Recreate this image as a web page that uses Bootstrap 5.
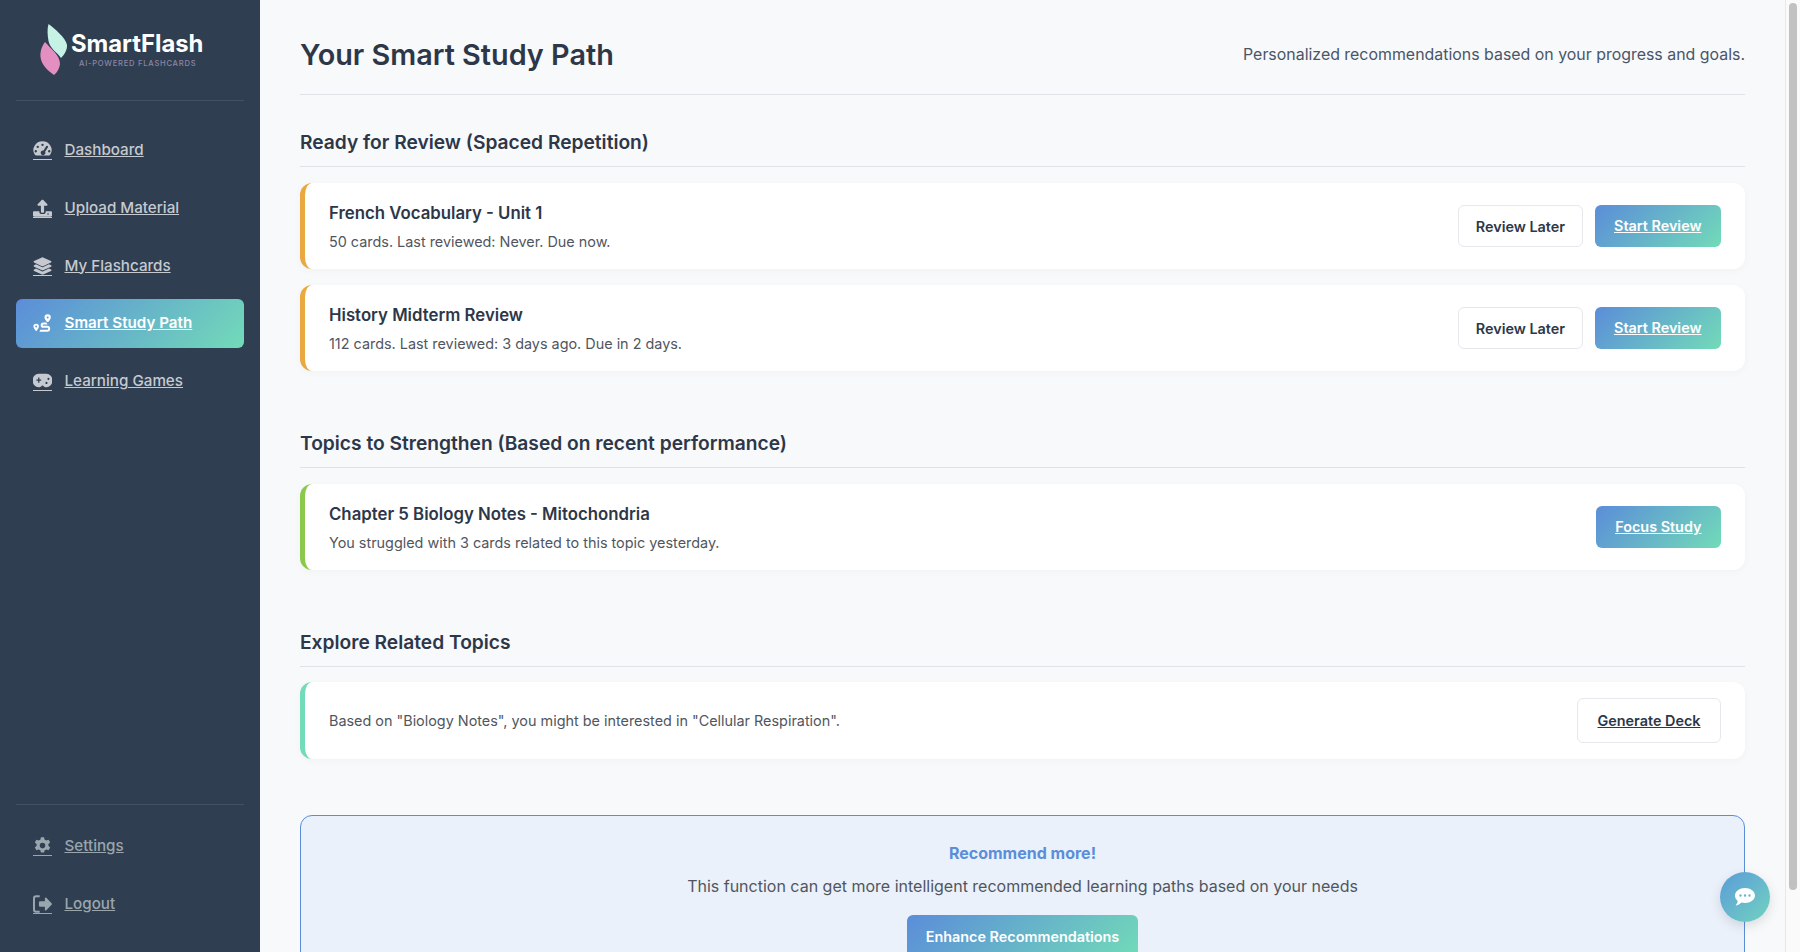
<!DOCTYPE html>
<html lang="en">
<head>
    <meta charset="UTF-8">
    <meta name="viewport" content="width=device-width, initial-scale=1.0">
    <title>SmartFlash - Smart Study Path</title>
    <link href="https://cdn.jsdelivr.net/npm/bootstrap@5.3.2/dist/css/bootstrap.min.css" rel="stylesheet">
    <style>
        html, body { height: 100%; }
        body {
            font-family: Inter, "Liberation Sans", sans-serif;
            background: #f7f9fb;
            color: #2d3748;
            overflow: hidden;
        }
        .sidebar {
            width: 260px;
            height: 100vh;
            background: #2f3e50;
            padding: 24px 16px 23px;
        }
        .logo-box { height: 77px; border-bottom: 1px solid #435062; padding-left: 24px; }
        .logo-name { font-size: 23.8px; font-weight: 700; color: #fff; line-height: 26px; margin-top: -1px; margin-left: -1px; }
        .logo-sub { font-size: 7.6px; font-weight: 500; color: #8d86a4; letter-spacing: .75px; line-height: 12px; margin-left: 7px; margin-top: 1px; }
        .sidebar-nav { margin-top: 25px; gap: 8.75px; }
        .side-link {
            height: 49px;
            padding: 0 17px;
            border-radius: 6px;
            color: #c6cad0;
            font-size: 15.2px;
            font-weight: 500;
            text-decoration: underline;
        }
        .side-link:hover { color: #fff; }
        .side-link.active {
            color: #fff;
            font-weight: 600;
            background: linear-gradient(135deg, #5b8dd9, #72dbb8);
        }
        .side-link .ico {
            width: 19px;
            height: 19px;
            margin-right: 12.500px;
            border-bottom: 1px solid currentColor;
            flex: none;
        }
        .side-link.active .ico { border-bottom: 0; }
        .side-link svg { display: block; width: 19px; height: 18px; fill: currentColor; }
        .sidebar-foot { border-top: 1px solid #435062; padding-top: 17px; gap: 8.75px; }
        .sidebar-foot .side-link { color: #9aa6ad; }
        .main-area { height: 100vh; overflow-y: auto; padding: 34px 40px 27px; min-width: 0; }
        .page-head { padding-bottom: 18px; border-bottom: 1px solid #dfe3e8; margin-bottom: 35px; }
        .page-head h1 { font-size: 28.8px; font-weight: 600; margin: 0; line-height: 42px; }
        .page-head p { font-size: 15.92px; color: #4a5568; margin: 0; }
        .sec-title {
            font-size: 19.2px;
            font-weight: 600;
            padding-bottom: 12px;
            border-bottom: 1px solid #dfe3e8;
            margin-bottom: 16px;
            line-height: 24px;
        }
        section { margin-bottom: 60px; }
        section.last-sec { margin-bottom: 56px; }
        section.last-sec .sec-title { margin-bottom: 15px; }
        .path-card {
            background: #fff;
            border: 0;
            border-left: 5px solid #e9a840;
            border-radius: 12px;
            box-shadow: 0 2px 8px rgba(0, 0, 0, .03);
            padding: 16px 24px;
            margin-bottom: 16px;
        }
        .path-card.weak { border-left-color: #8cc84b; }
        .path-card.related { border-left-color: #72dbb8; }
        .path-card h5 { font-size: 16.8px; font-weight: 600; line-height: 28px; margin: 0 0 4px; }
        .path-card p { font-size: 14.4px; line-height: 22px; color: #51565e; margin: 0; }
        .btn-later {
            font-size: 14.4px; font-weight: 600; color: #2d3748;
            background: #fff; border: 1.5px solid #e6e8ec; border-radius: 6px;
            padding: 9.5px 16.5px; line-height: 21px;
        }
        .btn-grad {
            font-size: 14.4px; font-weight: 600; color: #fff;
            background: linear-gradient(135deg, #5b8dd9, #72dbb8);
            border: 0; border-radius: 6px;
            padding: 10px 19.5px 11px; line-height: 21px;
            text-decoration: underline;
        }
        .btn-grad:hover { color: #fff; }
        .btn-gen { padding: 11px 19.5px; line-height: 21px; text-decoration: underline; }
        .promo {
            background: #eaf1fa;
            border: 1px solid #5b8dd9;
            border-radius: 12px;
            padding: 24px;
            text-align: center;
        }
        .promo h6 { font-size: 16px; font-weight: 700; color: #5b8dd9; margin: 0 0 7px; line-height: 27px; }
        .promo p { font-size: 16px; color: #51565e; margin: 0 0 17px; line-height: 24px; }
        .promo .btn-grad { text-decoration: none; padding: 11px 19px 12px; }
        .scroll-rail {
            width: 15px;
            height: 100vh;
            background: #fafafa;
            border-left: 1px solid #e8e8e8;
            padding: 3px 3px 0 3px;
        }
        .scroll-thumb { height: 887px; background: #c1c1c1; border-radius: 4px; }
        .chat-fab {
            position: fixed; right: 30px; bottom: 30px;
            width: 50px; height: 50px; border-radius: 50%;
            background: linear-gradient(135deg, #5b9bd9, #72d3bf);
            box-shadow: 0 4px 12px rgba(0, 0, 0, .12);
            border: 0;
        }
    </style>
</head>
<body>
<div class="d-flex">
    <aside class="sidebar d-flex flex-column flex-shrink-0">
        <div class="logo-box d-flex align-items-start">
            <svg width="28" height="52" viewBox="0 0 28 52" class="flex-shrink-0">
                <path d="M8.500 0C14 4 26 14 27 21 27.500 26 24 31 21 34 18 29 10 25 8.500 17 7.500 11 7 5 8.500 0Z" fill="#c6f1e5"/>
                <path d="M5 18C11 25 20 31 20 40 19.500 44 17 49 14 51 8 47 1 40 .500 33 0 27 2 22 5 18Z" fill="#e48fc1"/>
            </svg>
            <div class="ms-1 pt-2">
                <div class="logo-name">SmartFlash</div>
                <div class="logo-sub">AI-POWERED FLASHCARDS</div>
            </div>
        </div>
        <nav class="nav flex-column sidebar-nav flex-grow-1">
            <a class="nav-link side-link d-flex align-items-center" href="#">
                <span class="ico"><svg viewBox="0 0 24 22"><path fill-rule="evenodd" d="M12 0a11.500 11 0 0 1 10 16.500c-.5 1-1 1.500-2 1.500H4c-1 0-1.500-.5-2-1.500A11.500 11 0 0 1 12 0ZM12 3a1.500 1.500 0 1 0 0 3 1.500 1.500 0 0 0 0-3ZM6 5.500a1.500 1.500 0 1 0 0 3 1.500 1.500 0 0 0 0-3ZM3.500 11a1.500 1.500 0 1 0 0 3 1.500 1.500 0 0 0 0-3ZM20.500 11a1.500 1.500 0 1 0 0 3 1.500 1.500 0 0 0 0-3ZM18 5.500a1.500 1.500 0 0 0-1.200.6l-3.500 5.500a3 3 0 1 0 2 1.500l3.600-5.500A1.500 1.500 0 0 0 18 5.500Z"/></svg></span>
                Dashboard
            </a>
            <a class="nav-link side-link d-flex align-items-center" href="#">
                <span class="ico"><svg viewBox="0 0 24 22"><path d="M10 16V8H6.500c-.8 0-1.200-1-.6-1.600L11 1c.5-.6 1.500-.6 2 0l5.100 5.400c.6.6.2 1.600-.6 1.600H14v8c0 .6-.4 1-1 1h-2c-.6 0-1-.4-1-1Z"/><path fill-rule="evenodd" d="M1.500 15H8v1.500c0 1 1 2 2 2h4c1 0 2-1 2-2V15h6.500c.8 0 1.500.7 1.500 1.500v4c0 .8-.7 1.500-1.500 1.500h-21C.7 22 0 21.300 0 20.500v-4C0 15.700.7 15 1.500 15ZM19 17.500a1 1 0 1 0 0 2 1 1 0 0 0 0-2Z"/></svg></span>
                Upload Material
            </a>
            <a class="nav-link side-link d-flex align-items-center" href="#">
                <span class="ico"><svg viewBox="0 0 24 22"><path d="M11.300.2c.5-.2 1-.2 1.400 0l10 4.600c.8.400.8 1.500 0 1.800l-10 4.600c-.5.200-1 .2-1.400 0L1.300 6.600c-.8-.4-.8-1.500 0-1.800Z"/><path d="M3.800 8.800l7.300 3.400c.6.300 1.200.3 1.800 0l7.300-3.400 2.600 1.200c.8.400.8 1.500 0 1.800l-10 4.600c-.5.200-1 .2-1.400 0l-10-4.600c-.8-.4-.8-1.500 0-1.800Z"/><path d="M3.800 14.200l7.300 3.400c.6.300 1.200.3 1.800 0l7.300-3.400 2.600 1.200c.8.400.8 1.500 0 1.800l-10 4.600c-.5.200-1 .2-1.400 0l-10-4.600c-.8-.4-.8-1.500 0-1.800Z"/></svg></span>
                My Flashcards
            </a>
            <a class="nav-link side-link active d-flex align-items-center" href="#">
                <span class="ico"><svg viewBox="0 0 24 22"><path fill-rule="evenodd" d="M4 12a3.500 3.500 0 0 1 3.500 3.500c0 1.600-2.200 4.500-2.900 5.400-.3.400-.9.400-1.200 0C2.700 20 .5 17.100.5 15.500A3.500 3.500 0 0 1 4 12Zm0 2.300a1.200 1.200 0 1 0 0 2.400 1.200 1.200 0 0 0 0-2.400Z"/><path fill-rule="evenodd" d="M18.500 0a4 4 0 0 1 4 4c0 1.600-2 4.200-3 5.400-.5.600-1.500.6-2 0-1-1.200-3-3.800-3-5.400a4 4 0 0 1 4-4Zm0 2.700a1.300 1.300 0 1 0 0 2.600 1.300 1.300 0 0 0 0-2.600Z"/><path d="M17 10.500h-4a3.300 3.300 0 0 0 0 6.600h5a1.200 1.200 0 0 1 0 2.400H9.500L8 22h10a3.700 3.700 0 0 0 0-7.400h-5a.9.9 0 0 1 0-1.700h5.300Z"/></svg></span>
                Smart Study Path
            </a>
            <a class="nav-link side-link d-flex align-items-center" href="#">
                <span class="ico"><svg viewBox="0 0 24 20" preserveAspectRatio="none"><path fill-rule="evenodd" d="M7 2h10a7 7 0 0 1 0 15c-2 0-3.500-1-4.500-2h-1c-1 1-2.500 2-4.500 2A7 7 0 0 1 7 2Zm-.5 4v2.200H4.300v1.600h2.200V12h1.600V9.800h2.200V8.200H8.100V6ZM17 10.800a1.300 1.300 0 1 0 0 2.600 1.300 1.300 0 0 0 0-2.600Zm2.500-4.500a1.300 1.300 0 1 0 0 2.600 1.300 1.300 0 0 0 0-2.600Z"/></svg></span>
                Learning Games
            </a>
        </nav>
        <nav class="nav flex-column sidebar-foot">
            <a class="nav-link side-link d-flex align-items-center" href="#">
                <span class="ico"><svg viewBox="0 0 24 22"><path fill-rule="evenodd" d="M10 0h4l.7 3c.7.2 1.400.6 2 1l3-1 2 3.500-2.300 2a7 7 0 0 1 0 2.300l2.300 2-2 3.500-3-1c-.6.500-1.300.8-2 1l-.7 3h-4l-.7-3c-.7-.2-1.400-.5-2-1l-3 1-2-3.500 2.300-2a7 7 0 0 1 0-2.300l-2.300-2 2-3.500 3 1c.6-.4 1.300-.8 2-1ZM12 7a3.500 3.500 0 1 0 0 7 3.500 3.500 0 0 0 0-7Z"/></svg></span>
                Settings
            </a>
            <a class="nav-link side-link d-flex align-items-center" href="#">
                <span class="ico"><svg viewBox="0 0 24 22"><path d="M8.500 2.500H4a1.500 1.500 0 0 0-1.500 1.500v14A1.500 1.500 0 0 0 4 19.500h4.500V22H4a4 4 0 0 1-4-4V4a4 4 0 0 1 4-4h4.500Z"/><path d="M15 3.800c0-1 1.100-1.500 1.800-.8l6.700 7c.6.600.6 1.400 0 2l-6.700 7c-.7.700-1.800.2-1.800-.8V14.500H9a1.500 1.500 0 0 1-1.500-1.500V9A1.500 1.500 0 0 1 9 7.500h6Z"/></svg></span>
                Logout
            </a>
        </nav>
    </aside>

    <main class="main-area flex-grow-1">
        <header class="page-head d-flex justify-content-between align-items-center">
            <h1>Your Smart Study Path</h1>
            <p>Personalized recommendations based on your progress and goals.</p>
        </header>

        <section>
            <h2 class="sec-title">Ready for Review (Spaced Repetition)</h2>
            <div class="path-card d-flex justify-content-between align-items-center">
                <div>
                    <h5>French Vocabulary - Unit 1</h5>
                    <p>50 cards. Last reviewed: Never. Due now.</p>
                </div>
                <div class="d-flex align-items-center gap-2">
                    <button class="btn btn-later me-1" type="button">Review Later</button>
                    <a class="btn btn-grad" href="#">Start Review</a>
                </div>
            </div>
            <div class="path-card d-flex justify-content-between align-items-center">
                <div>
                    <h5>History Midterm Review</h5>
                    <p>112 cards. Last reviewed: 3 days ago. Due in 2 days.</p>
                </div>
                <div class="d-flex align-items-center gap-2">
                    <button class="btn btn-later me-1" type="button">Review Later</button>
                    <a class="btn btn-grad" href="#">Start Review</a>
                </div>
            </div>
        </section>

        <section>
            <h2 class="sec-title">Topics to Strengthen (Based on recent performance)</h2>
            <div class="path-card weak d-flex justify-content-between align-items-center">
                <div>
                    <h5>Chapter 5 Biology Notes - Mitochondria</h5>
                    <p>You struggled with 3 cards related to this topic yesterday.</p>
                </div>
                <a class="btn btn-grad" href="#">Focus Study</a>
            </div>
        </section>

        <section class="last-sec">
            <h2 class="sec-title">Explore Related Topics</h2>
            <div class="path-card related d-flex justify-content-between align-items-center">
                <p>Based on "Biology Notes", you might be interested in "Cellular Respiration".</p>
                <a class="btn btn-later btn-gen" href="#">Generate Deck</a>
            </div>
        </section>

        <div class="promo">
            <h6>Recommend more!</h6>
            <p>This function can get more intelligent recommended learning paths based on your needs</p>
            <a class="btn btn-grad" href="#">Enhance Recommendations</a>
        </div>
    </main>

    <div class="scroll-rail flex-shrink-0"><div class="scroll-thumb"></div></div>
</div>

<button class="chat-fab d-flex align-items-center justify-content-center" type="button" aria-label="Chat">
    <svg width="20" height="18" viewBox="0 0 20 18"><path fill-rule="evenodd" fill="#fff" d="M10 0c5.500 0 10 3.300 10 7.500S15.500 15 10 15c-1.300 0-2.500-.2-3.600-.5C5 15.800 3 17.500.5 17.500c1.300-1.500 2-3 2.200-4.500C1 11.600 0 9.700 0 7.500 0 3.300 4.500 0 10 0ZM5.500 6.300a1.200 1.200 0 1 0 0 2.400 1.200 1.200 0 0 0 0-2.400Zm4.500 0a1.200 1.200 0 1 0 0 2.400 1.200 1.200 0 0 0 0-2.400Zm4.500 0a1.200 1.200 0 1 0 0 2.400 1.200 1.200 0 0 0 0-2.400Z"/></svg>
</button>

<script src="https://cdn.jsdelivr.net/npm/bootstrap@5.3.2/dist/js/bootstrap.bundle.min.js"></script>
</body>
</html>
